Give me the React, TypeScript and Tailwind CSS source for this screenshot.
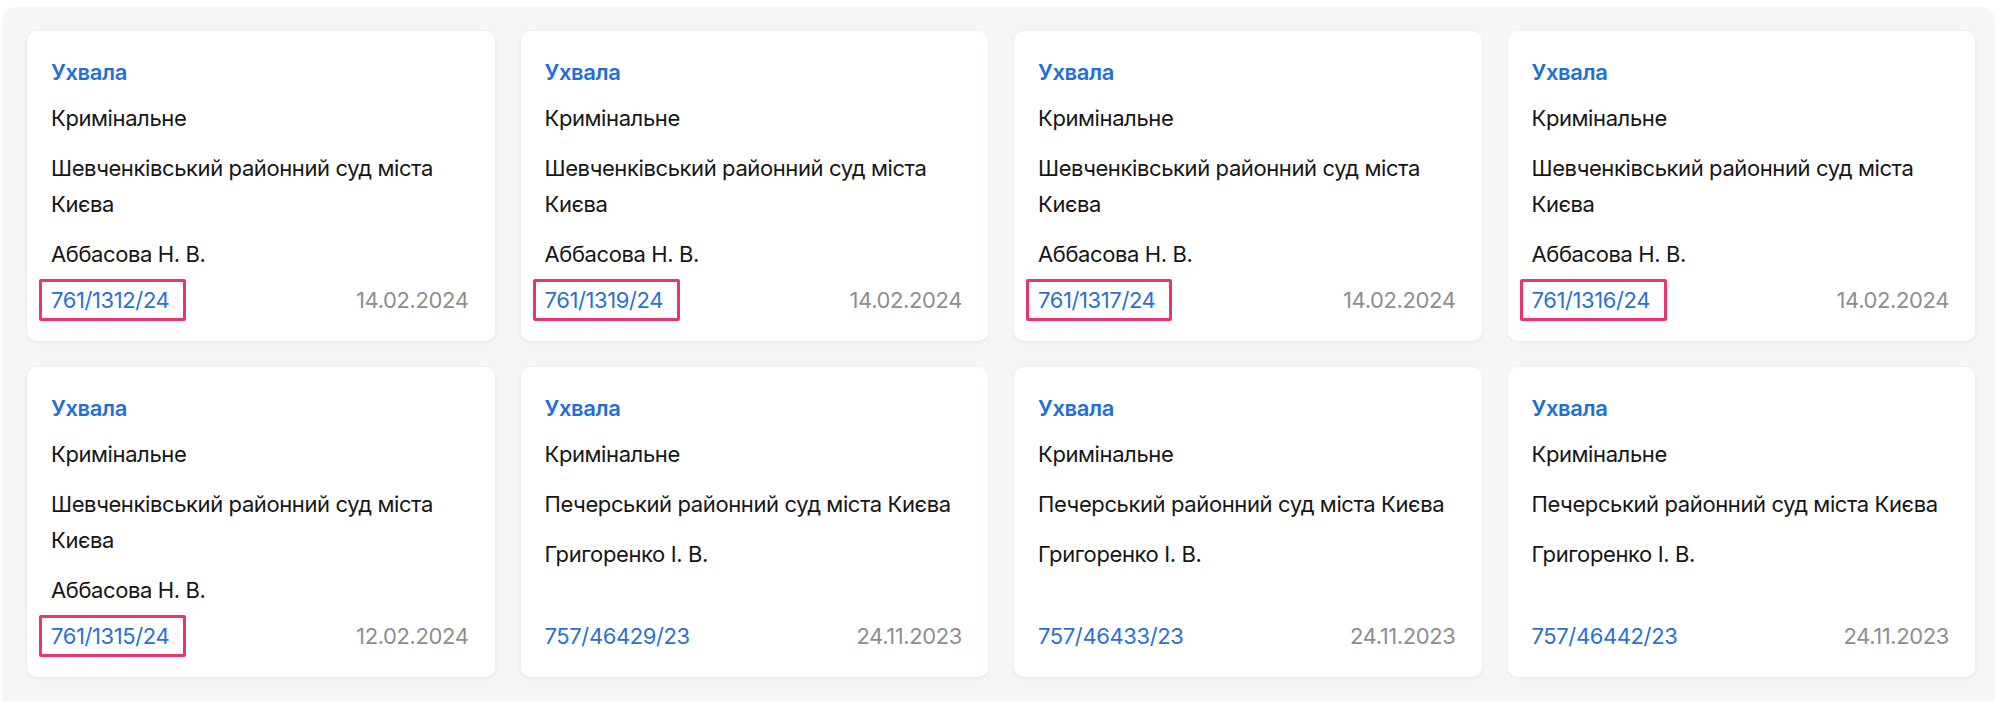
import React from "react";

type Decision = {
  court: string;
  judge: string;
  number: string;
  date: string;
  marked?: boolean;
};

const decisions: Decision[] = [
  { court: "Шевченківський районний суд міста Києва", judge: "Аббасова Н. В.", number: "761/1312/24", date: "14.02.2024", marked: true },
  { court: "Шевченківський районний суд міста Києва", judge: "Аббасова Н. В.", number: "761/1319/24", date: "14.02.2024", marked: true },
  { court: "Шевченківський районний суд міста Києва", judge: "Аббасова Н. В.", number: "761/1317/24", date: "14.02.2024", marked: true },
  { court: "Шевченківський районний суд міста Києва", judge: "Аббасова Н. В.", number: "761/1316/24", date: "14.02.2024", marked: true },
  { court: "Шевченківський районний суд міста Києва", judge: "Аббасова Н. В.", number: "761/1315/24", date: "12.02.2024", marked: true },
  { court: "Печерський районний суд міста Києва", judge: "Григоренко І. В.", number: "757/46429/23", date: "24.11.2023" },
  { court: "Печерський районний суд міста Києва", judge: "Григоренко І. В.", number: "757/46433/23", date: "24.11.2023" },
  { court: "Печерський районний суд міста Києва", judge: "Григоренко І. В.", number: "757/46442/23", date: "24.11.2023" },
];

const DecisionCard = ({ item }: { item: Decision }) => {
  return (
    <div className="flex flex-col h-[310px] bg-white rounded-[10px] shadow-[0_1px_4px_rgba(15,23,42,0.07)] px-[24px] pt-[23px] pb-[23px]">
      <span className="leading-[36px] font-semibold text-[#1f6fd6]">Ухвала</span>
      <span className="mt-[10px] leading-[36px] text-[#161616]">Кримінальне</span>
      <span className="mt-[14px] leading-[36px] text-[#161616]">{item.court}</span>
      <span className="mt-[14px] leading-[36px] text-[#161616]">{item.judge}</span>
      <div className="mt-auto flex items-center justify-between leading-[36px]">
        {item.marked ? (
          <span className="inline-block -ml-3 -my-[3px] pl-[9px] pr-[14px] border-[3px] border-[#e8356d] rounded-[2px] text-[#2a71d0]">
            {item.number}
          </span>
        ) : (
          <span className="text-[#2a71d0]">{item.number}</span>
        )}
        <span className="text-[#8e8e8e] mr-[2px]">{item.date}</span>
      </div>
    </div>
  );
};

export default function App() {
  return (
    <div className="w-[2000px] h-[701px] bg-white overflow-hidden font-['Inter','Noto_Sans',sans-serif] text-[22px] tracking-[-0.018em]">
      <div className="ml-[2px] mt-[7px] w-[1993px] h-[720px] rounded-[14px] bg-[#f5f6f8] pl-[25px] pr-[20px] pt-[24px]">
        <div className="grid grid-cols-4 gap-[26px]">
          {decisions.map((item) => (
            <DecisionCard key={item.number} item={item} />
          ))}
        </div>
      </div>
    </div>
  );
}
